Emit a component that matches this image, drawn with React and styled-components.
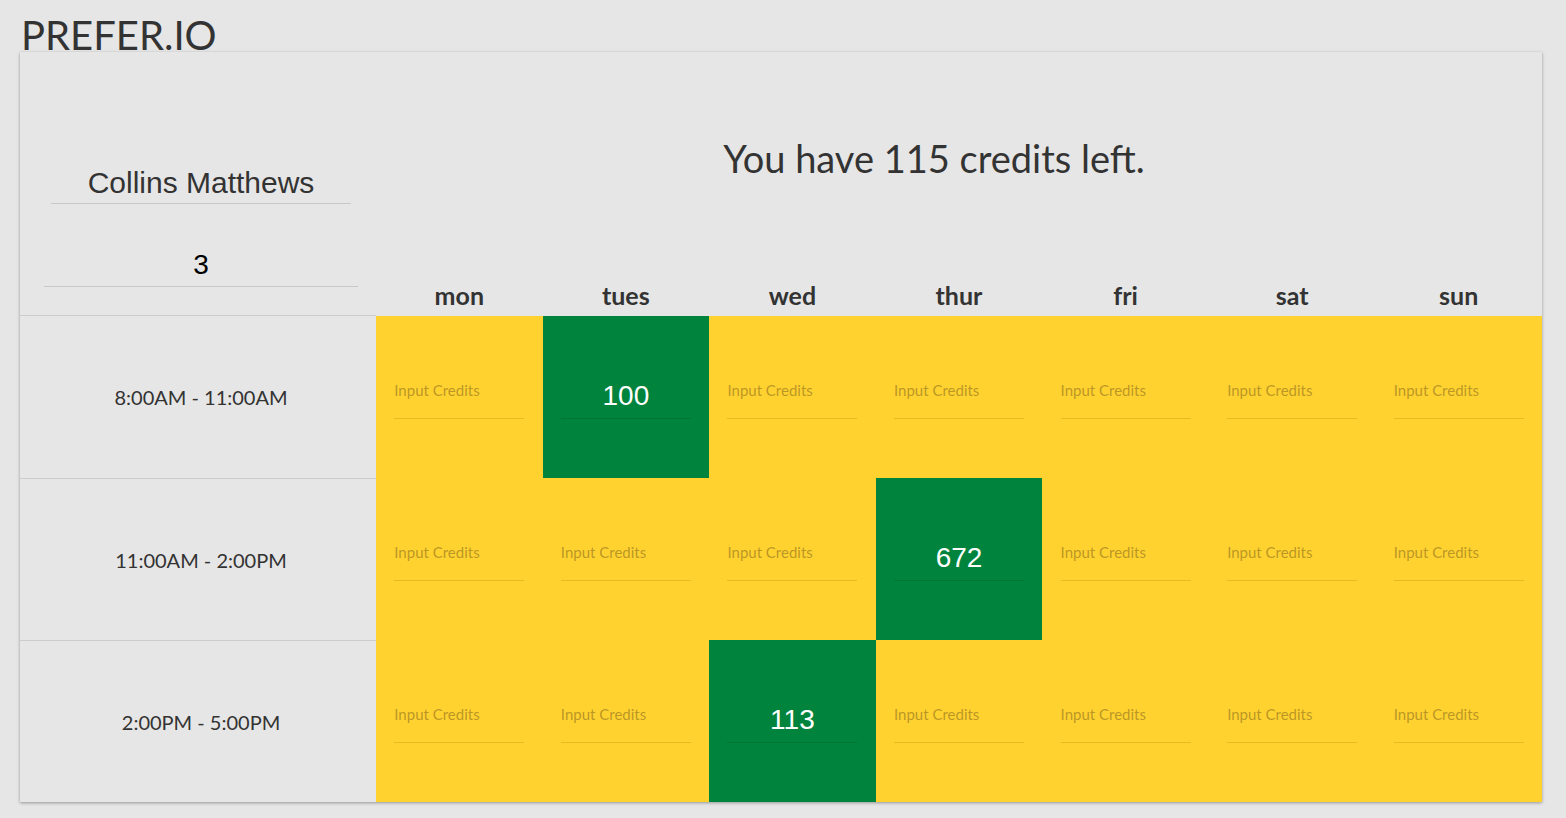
import React from "react";
import styled, { createGlobalStyle } from "styled-components";

const GlobalStyle = createGlobalStyle`
  html, body {
    margin: 0;
    padding: 0;
    background-color: #e6e6e6;
    font-family: "Lato", "Open Sans", sans-serif;
    color: #333;
  }
`;

const days = ["mon", "tues", "wed", "thur", "fri", "sat", "sun"];

const slots = [
  { label: "8:00AM - 11:00AM", values: { tues: "100" } },
  { label: "11:00AM - 2:00PM", values: { thur: "672" } },
  { label: "2:00PM - 5:00PM", values: { wed: "113" } },
];

const App = () => {
  return (
    <Page>
      <GlobalStyle />
      <Logo>PREFER.IO</Logo>
      <Card>
        <UserCell>
          <NameInput defaultValue="Collins Matthews" />
          <CountInput defaultValue="3" />
        </UserCell>
        <HeaderCell>
          <Credits>You have 115 credits left.</Credits>
          <DayRow>
            {days.map((day) => (
              <DayLabel key={day}>{day}</DayLabel>
            ))}
          </DayRow>
        </HeaderCell>
        {slots.map((slot) => (
          <React.Fragment key={slot.label}>
            <TimeCell>{slot.label}</TimeCell>
            {days.map((day) => {
              const value = slot.values[day];
              return (
                <SlotCell key={day} $filled={!!value}>
                  <CreditInput
                    $filled={!!value}
                    placeholder="Input Credits"
                    defaultValue={value || ""}
                  />
                </SlotCell>
              );
            })}
          </React.Fragment>
        ))}
      </Card>
    </Page>
  );
};

export default App;

const Page = styled.div`
  padding: 0 24px 16px 20px;
`;

const Logo = styled.h1`
  margin: 0;
  padding: 10px 0 0 1px;
  height: 42px;
  font-size: 40px;
  font-weight: 400;
  line-height: 50px;
  color: #333;
`;

const Card = styled.div`
  display: grid;
  grid-template-columns: 356px repeat(7, 1fr);
  grid-template-rows: 264px repeat(3, 162px);
  background-color: #e6e6e6;
  box-shadow: 0 1px 3px rgba(0, 0, 0, 0.35);
`;

const UserCell = styled.div`
  display: flex;
  flex-direction: column;
  align-items: center;
  padding-top: 110px;
  padding-left: 6px;
  border-bottom: 1px solid #ccc;
`;

const BaseInput = styled.input`
  box-sizing: border-box;
  border: none;
  outline: none;
  background: transparent;
  text-align: center;
  font-family: "Liberation Sans", Arial, sans-serif;
  border-bottom: 1px solid #c8c8c8;
  padding: 0;
`;

const NameInput = styled(BaseInput)`
  width: 300px;
  height: 42px;
  font-size: 30px;
  color: #333;
`;

const CountInput = styled(BaseInput)`
  width: 314px;
  height: 44px;
  margin-top: 39px;
  font-size: 28px;
  color: #000;
`;

const HeaderCell = styled.div`
  grid-column: 2 / span 7;
  display: flex;
  flex-direction: column;
`;

const Credits = styled.h2`
  margin: 0;
  padding: 78px 50px 0 0;
  text-align: center;
  font-size: 38px;
  font-weight: 400;
  line-height: 56px;
  color: #333;
`;

const DayRow = styled.div`
  margin-top: auto;
  display: grid;
  grid-template-columns: repeat(7, 1fr);
`;

const DayLabel = styled.div`
  text-align: center;
  font-size: 25px;
  font-weight: 700;
  line-height: 36px;
  padding-bottom: 3px;
  color: #333;
`;

const TimeCell = styled.div`
  display: flex;
  align-items: center;
  justify-content: center;
  padding-left: 6px;
  font-size: 20px;
  color: #333;
  &:nth-child(n + 11) {
    border-top: 1px solid #ccc;
  }
`;

const SlotCell = styled.div`
  display: flex;
  align-items: center;
  justify-content: center;
  background-color: ${({ $filled }) => ($filled ? "#00843d" : "#ffd230")};
`;

const CreditInput = styled.input`
  width: 130px;
  height: 42px;
  margin-top: 2px;
  padding: 0 0 ${({ $filled }) => ($filled ? "3px" : "16px")} 0;
  box-sizing: border-box;
  border: none;
  outline: none;
  background: transparent;
  border-bottom: 1px solid
    ${({ $filled }) => ($filled ? "rgba(0, 0, 0, 0.12)" : "rgba(180, 130, 0, 0.3)")};
  text-align: ${({ $filled }) => ($filled ? "center" : "left")};
  font-family: ${({ $filled }) =>
    $filled ? '"Liberation Sans", Arial, sans-serif' : '"Lato", sans-serif'};
  font-size: ${({ $filled }) => ($filled ? "28px" : "15px")};
  color: #fff;

  &::placeholder {
    color: rgba(140, 110, 30, 0.6);
  }
`;
